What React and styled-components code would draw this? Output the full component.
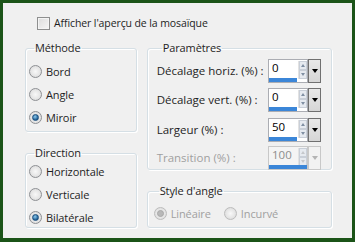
import React from 'react'
import styled, { createGlobalStyle } from 'styled-components'

const Global = createGlobalStyle`
  html, body { margin: 0; padding: 0; background: #f0f0f0; }
  body {
    font-family: "Open Sans", "DejaVu Sans", sans-serif;
    font-size: 10.5px;
    letter-spacing: -0.1px;
    color: #1e1e1e;
  }
`

const Frame = styled.div`
  box-sizing: border-box;
  width: 355px;
  height: 242px;
  border: 3px solid #1b5418;
  border-bottom-width: 4px;
  background: #f0f0f0;
  padding: 13px 20px 0 22px;
  display: flex;
  flex-direction: column;
`

const CheckRow = styled.label`
  display: flex;
  align-items: center;
  gap: 4px;
  margin-left: 12px;
  height: 14px;
`

const CheckBox = styled.span`
  box-sizing: border-box;
  width: 13px;
  height: 13px;
  border: 1px solid #8e8f8f;
  background: linear-gradient(135deg, #dcdcdc, #f6f6f6);
  box-shadow: inset 0 0 0 1px #f4f4f4;
`

const Columns = styled.div`
  display: flex;
  gap: 10px;
  margin-top: 12px;
`

const Column = styled.div`
  display: flex;
  flex-direction: column;
  gap: 15px;
  width: ${p => p.$w}px;
`

const Group = styled.fieldset`
  box-sizing: border-box;
  margin: 0;
  height: ${p => p.$h}px;
  border: 1px solid #d5dfe5;
  border-radius: 3px;
  box-shadow: inset 1px 1px 0 #fff, 1px 1px 0 #fff;
  padding: ${p => p.$pad || '4px 0 0 3px'};
  display: flex;
  flex-direction: ${p => p.$row ? 'row' : 'column'};
  gap: ${p => p.$gap || 0}px;
  min-width: 0;
`

const Legend = styled.legend`
  padding: 0 1px;
  margin-left: 5px;
  line-height: 12px;
  font-size: 11px;
  color: #1e1e1e;
`

const RadioRow = styled.div`
  display: flex;
  align-items: center;
  gap: 4px;
  height: 23px;
  font-size: 11px;
  color: ${p => p.$disabled ? '#a0a0a0' : '#1e1e1e'};
`

const RadioDot = styled.span`
  box-sizing: border-box;
  width: 13px;
  height: 13px;
  border-radius: 50%;
  border: 1px solid ${p => p.$disabled ? '#bcbcbc' : '#8e9094'};
  background: radial-gradient(circle at 50% 50%, #f8f8f8 0, #e6e6e6 55%, #d2d2d2 100%);
  display: flex;
  align-items: center;
  justify-content: center;
  &::after {
    content: '';
    display: ${p => p.$on ? 'block' : 'none'};
    width: 5px;
    height: 5px;
    border-radius: 50%;
    background: ${p => p.$disabled ? '#b8b8b8' : 'radial-gradient(circle at 40% 35%, #8ccbf0, #1f5d92 70%)'};
    border: 1px solid ${p => p.$disabled ? '#a8a8a8' : '#1b4f7e'};
  }
`

const ParamRow = styled.div`
  display: flex;
  align-items: center;
  justify-content: space-between;
  height: ${p => p.$h || 29}px;
  padding-right: 10px;
  font-size: 11.5px;
  letter-spacing: 0;
  color: ${p => p.$disabled ? '#a0a0a0' : '#1e1e1e'};
`

const Spin = styled.div`
  display: flex;
  height: 24px;
`

const Field = styled.div`
  position: relative;
  box-sizing: border-box;
  width: 40px;
  height: 24px;
  border: 1px solid ${p => p.$disabled ? '#c8c8c8' : '#abadb3'};
  background: ${p => p.$disabled ? '#f4f4f4' : '#fff'};
  display: flex;
  color: ${p => p.$disabled ? '#8d8d8d' : '#000'};
`

const Value = styled.span`
  width: 29px;
  padding: 1px 0 0 3px;
  line-height: 13px;
`

const Bar = styled.span`
  position: absolute;
  left: 0;
  bottom: 0;
  height: 4px;
  background: #3b86d8;
  width: ${p => p.$full ? 38 : 28}px;
`

const Arrows = styled.div`
  display: flex;
  flex-direction: column;
  width: 9px;
  height: 18px;
  margin-top: 1px;
  border-left: 1px solid #e2e2e2;
`

const ArrowCell = styled.span`
  flex: 1;
  display: flex;
  align-items: center;
  justify-content: center;
  background: #e6eaf0;
  border: 1px solid #c9cfd8;
  &::after {
    content: '';
    border-left: 2.5px solid transparent;
    border-right: 2.5px solid transparent;
    ${p => p.$up ? 'border-bottom' : 'border-top'}: 3px solid ${p => p.$disabled ? '#c5c8cc' : '#7f8fa3'};
  }
`

const Drop = styled.div`
  box-sizing: border-box;
  width: 13px;
  height: 24px;
  border: 1px solid ${p => p.$disabled ? '#c8c8c8' : '#707070'};
  background: ${p => p.$disabled ? '#f2f2f2' : 'linear-gradient(#e8e8e8, #d6d6d6)'};
  display: flex;
  align-items: center;
  justify-content: center;
  &::after {
    content: '';
    border-left: 3.5px solid transparent;
    border-right: 3.5px solid transparent;
    border-top: 4px solid ${p => p.$disabled ? '#b4b4b4' : '#000'};
  }
`

const Radio = ({ label, on, disabled }) => (
  <RadioRow $disabled={disabled}>
    <RadioDot $on={on} $disabled={disabled} />
    {label}
  </RadioRow>
)

const SpinField = ({ value, disabled }) => (
  <Spin>
    <Field $disabled={disabled}>
      <Value>{value}</Value>
      <Arrows>
        <ArrowCell $up $disabled={disabled} />
        <ArrowCell $disabled={disabled} />
      </Arrows>
      <Bar $full={disabled} />
    </Field>
    <Drop $disabled={disabled} />
  </Spin>
)

export default function App() {
  return (
    <Frame>
      <Global />
      <CheckRow>
        <CheckBox />
        Afficher l'aperçu de la mosaïque
      </CheckRow>
      <Columns>
        <Column $w={112}>
          <Group $h={90} $pad="6px 0 0 3px">
            <Legend>Méthode</Legend>
            <Radio label="Bord" />
            <Radio label="Angle" />
            <Radio label="Miroir" on />
          </Group>
          <Group $h={81} $pad="1px 0 0 3px">
            <Legend>Direction</Legend>
            <Radio label="Horizontale" />
            <Radio label="Verticale" />
            <Radio label="Bilatérale" on />
          </Group>
        </Column>
        <Column $w={186}>
          <Group $h={128} $pad="2px 0 0 9px">
            <Legend>Paramètres</Legend>
            <ParamRow>
              Décalage horiz. (%) :
              <SpinField value="0" />
            </ParamRow>
            <ParamRow>
              Décalage vert. (%) :
              <SpinField value="0" />
            </ParamRow>
            <ParamRow $h={31}>
              Largeur (%) :
              <SpinField value="50" />
            </ParamRow>
            <ParamRow $h={25} $disabled>
              Transition (%) :
              <SpinField value="100" disabled />
            </ParamRow>
          </Group>
          <Group $h={43} $row $gap={13} $pad="5px 0 0 6px">
            <Legend>Style d'angle</Legend>
            <Radio label="Linéaire" on disabled />
            <Radio label="Incurvé" disabled />
          </Group>
        </Column>
      </Columns>
    </Frame>
  )
}
